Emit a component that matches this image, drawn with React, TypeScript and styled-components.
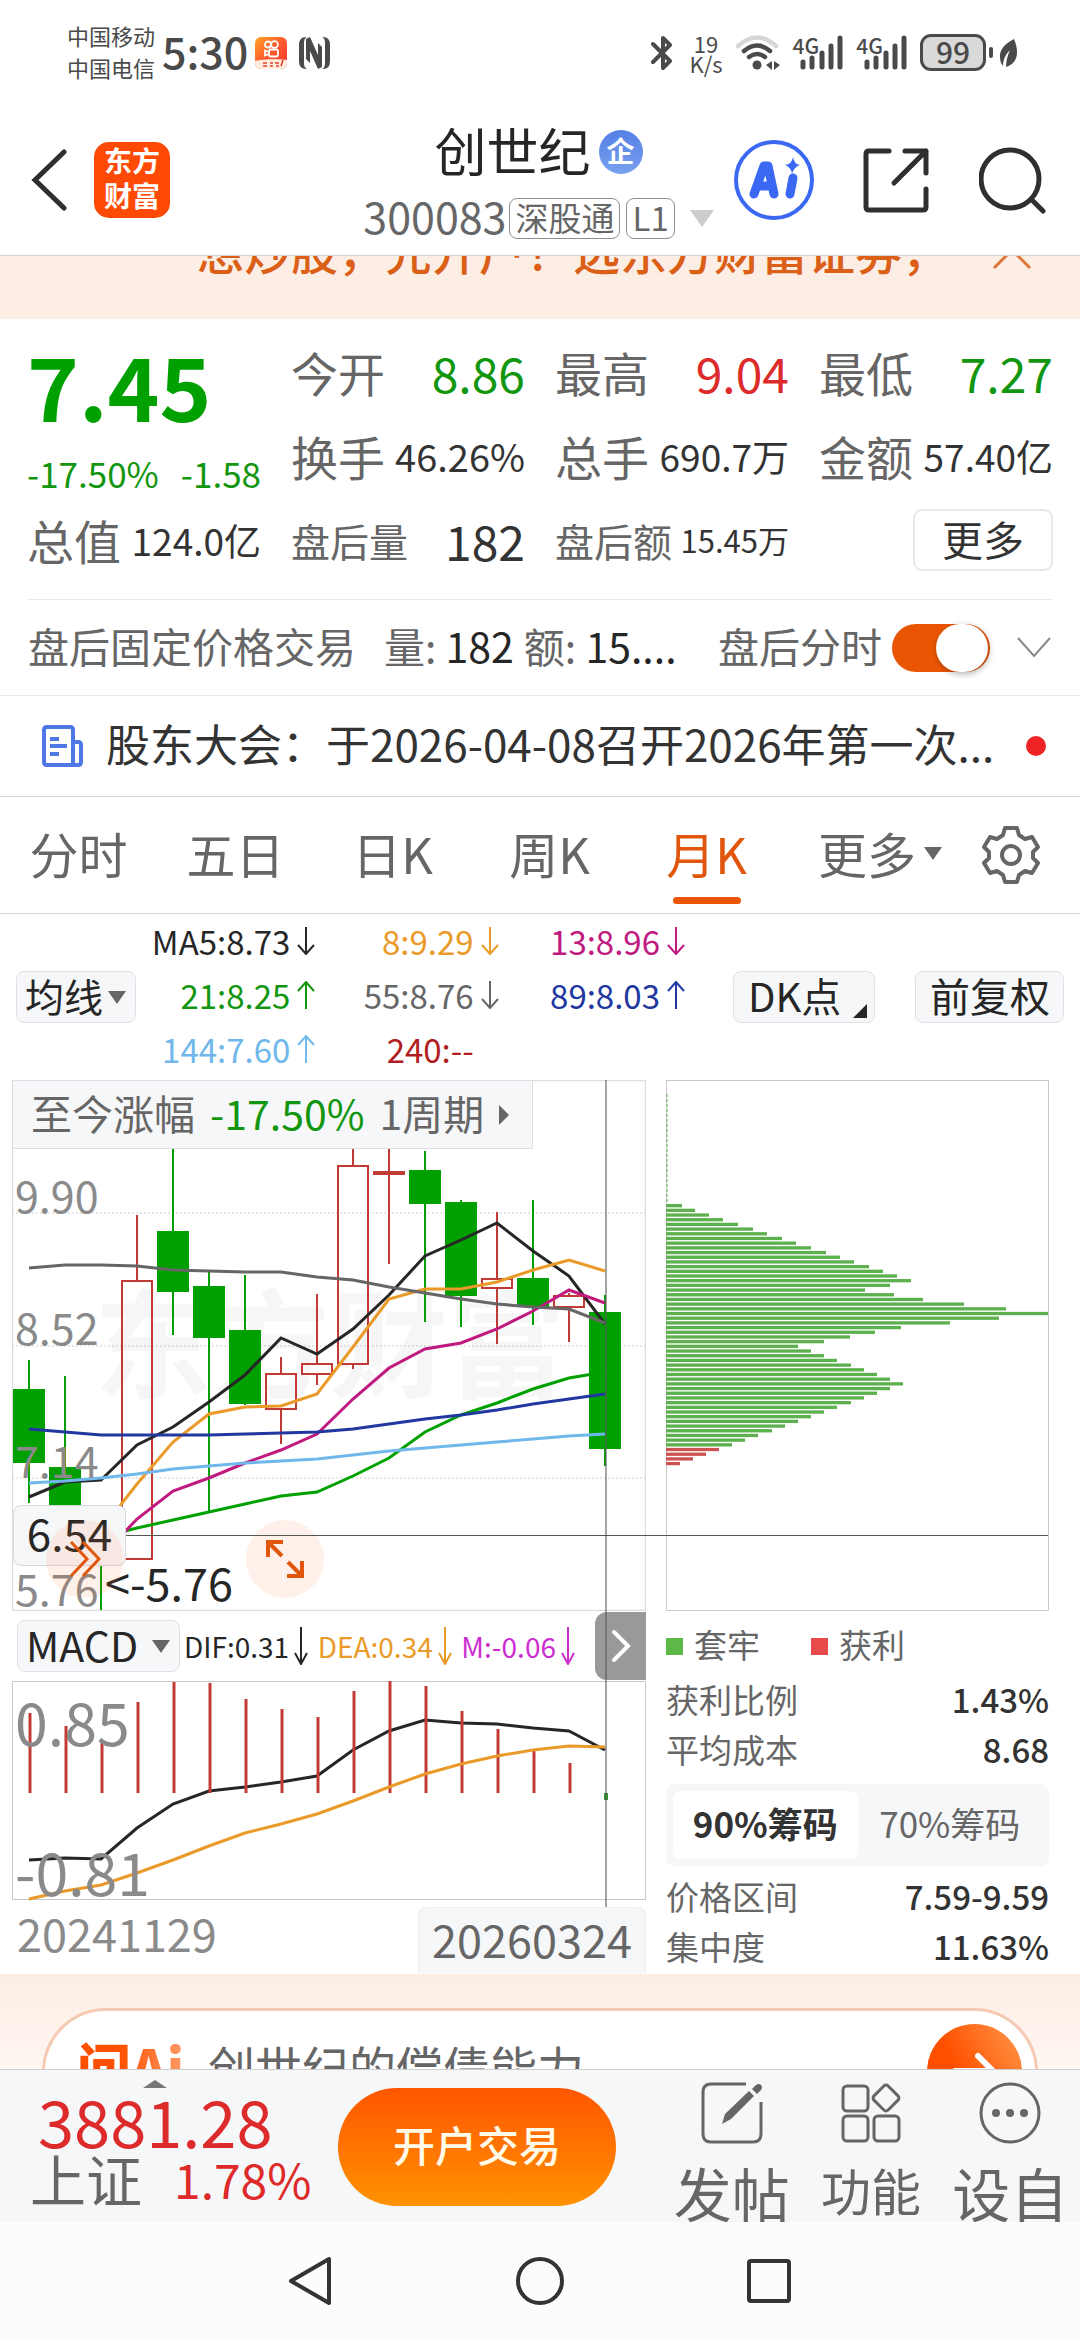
import React from "react";
import styled, { createGlobalStyle } from "styled-components";

const FONT = '"Noto Sans CJK SC", "Noto Sans", sans-serif';
const C = {
  ink: "#262626",
  text: "#333333",
  sub: "#666666",
  mute: "#8a8a8a",
  green: "#12960f",
  candle: "#00a000",
  red: "#dd2a2a",
  candleRed: "#c23a36",
  orange: "#ea5504",
  amber: "#ea9a28",
  pink: "#c01a80",
  navy: "#2138a0",
  sky: "#70b8ec",
  line: "#e9e9e9",
  soft: "#f6f7f9",
  peach: "#fceee5",
};

const Global = createGlobalStyle`
  * { box-sizing: border-box; }
  html, body { margin: 0; background: #fff; }
  body { font-family: ${FONT}; color: ${C.text}; }
  button, select, input { font: inherit; color: inherit; margin: 0; }
  button { background: none; border: 0; padding: 0; cursor: pointer; }
  dl, dd, dt, p, h1 { margin: 0; font-weight: 400; }
  svg { display: block; flex: none; }
`;

const Shell = styled.div`
  display: flex;
  flex-direction: column;
  height: 100vh;
  overflow: hidden;
`;

/* ---------- system status bar ---------- */
const StatusBar = styled.div`
  display: flex;
  align-items: center;
  justify-content: space-between;
  height: 105px;
  padding: 0 61px 0 67px;
  color: #4a4a4a;
  flex: none;
`;
const StatusGroup = styled.div<{ $gap: number }>`
  display: flex;
  align-items: center;
  gap: ${(p) => p.$gap}px;
`;
const Carriers = styled.div`
  font-size: 22px;
  line-height: 32px;
  padding-bottom: 4px;
`;
const Clock = styled.div`
  font-size: 43px;
  line-height: 48px;
  font-weight: 500;
  padding-bottom: 6px;
`;
const Rate = styled.div`
  font-size: 22px;
  line-height: 20px;
  text-align: center;
`;
const Signal = styled.div`
  display: flex;
  align-items: flex-start;
  height: 36px;
  font-size: 21px;
  line-height: 20px;
  font-weight: 500;
  svg { margin-left: -19px; }
`;
const Battery = styled.div`
  width: 66px;
  height: 37px;
  border: 3px solid #4a4a4a;
  border-radius: 11px;
  background: #d9d9d9;
  font-size: 30px;
  line-height: 28px;
  font-weight: 500;
  text-align: center;
`;

/* ---------- page header ---------- */
const Header = styled.header`
  display: grid;
  grid-template-columns: 1fr auto 1fr;
  align-items: center;
  height: 151px;
  padding: 0 34px 0 31px;
  border-bottom: 1px solid #d4d4d4;
  flex: none;
`;
const HeaderLeft = styled.div`
  display: flex;
  align-items: center;
  gap: 27px;
`;
const HeaderRight = styled.div`
  display: flex;
  align-items: center;
  justify-content: flex-end;
  gap: 49px;
`;
const Brand = styled.a`
  display: grid;
  place-content: center;
  width: 76px;
  height: 76px;
  border-radius: 15px;
  background: #ff4a05;
  color: #fff;
  font-size: 28px;
  line-height: 35px;
  font-weight: 700;
  text-decoration: none;
  padding-bottom: 4px;
`;
const TitleBlock = styled.div`
  display: flex;
  flex-direction: column;
  align-items: center;
`;
const TitleRow = styled.div`
  display: flex;
  align-items: center;
  gap: 8px;
  padding-top: 6px;
`;
const Title = styled.h1`
  font-size: 52px;
  line-height: 66px;
  color: ${C.ink};
  padding-bottom: 4px;
`;
const Verified = styled.span`
  width: 44px;
  height: 44px;
  border-radius: 50%;
  background: linear-gradient(#5480e6, #79a1ee);
  color: #fff;
  font-size: 28px;
  line-height: 40px;
  font-weight: 700;
  text-align: center;
`;
const CodeRow = styled.div`
  display: flex;
  align-items: center;
  height: 62px;
  color: ${C.sub};
`;
const Code = styled.span`
  font-size: 43px;
  line-height: 44px;
  padding-bottom: 6px;
`;
const Tag = styled.span<{ $left: number }>`
  height: 41px;
  margin-left: ${(p) => p.$left}px;
  padding: 0 5px;
  border: 1px solid #8f8f8f;
  border-radius: 8px;
  font-size: 33px;
  line-height: 36px;
`;
const Caret = styled.i<{ $size: number; $color: string; $left?: number; $up?: boolean }>`
  width: 0;
  height: 0;
  flex: none;
  margin-left: ${(p) => p.$left ?? 0}px;
  border: ${(p) => p.$size}px solid transparent;
  border-top: ${(p) => (p.$up ? "0 solid transparent" : `${Math.round(p.$size * 1.4)}px solid ${p.$color}`)};
  border-bottom: ${(p) => (p.$up ? `${p.$size - 4}px solid ${p.$color}` : "0 solid transparent")};
`;

/* ---------- scrolling content ---------- */
const Main = styled.main`
  flex: 1;
  min-height: 0;
  overflow: hidden;
`;
const Promo = styled.div`
  height: 63px;
  overflow: hidden;
  background: ${C.peach};
`;
const PromoRow = styled.div`
  display: flex;
  justify-content: space-between;
  align-items: center;
  height: 64px;
  margin-top: -38px;
  padding: 0 48px 0 197px;
  color: #db5f16;
  font-size: 47px;
  font-weight: 500;
  line-height: 60px;
  white-space: nowrap;
`;

const Quote = styled.section`
  display: grid;
  grid-template-columns: repeat(4, 1fr);
  grid-template-rows: repeat(3, 84px);
  column-gap: 30px;
  margin: 0 27px;
  padding: 11px 0 17px;
  border-bottom: 1px solid ${C.line};
`;
const PriceCell = styled.div`
  grid-row: span 2;
  color: ${C.green};
`;
const Price = styled.div`
  font-size: 88px;
  line-height: 108px;
  font-weight: 700;
  color: ${C.candle};
`;
const Change = styled.div`
  display: flex;
  justify-content: space-between;
  font-size: 35px;
  line-height: 70px;
`;
const Stat = styled.dl`
  display: flex;
  align-items: center;
  justify-content: space-between;
  white-space: nowrap;
`;
const StatLabel = styled.dt<{ $small?: boolean }>`
  font-size: ${(p) => (p.$small ? 39 : 47)}px;
  line-height: 60px;
  color: ${C.sub};
`;
const StatValue = styled.dd<{ $size: number; $color?: string }>`
  font-size: ${(p) => p.$size}px;
  line-height: 60px;
  color: ${(p) => p.$color ?? C.text};
`;
const MoreButton = styled.button`
  justify-self: end;
  align-self: center;
  width: 140px;
  height: 62px;
  border: 2px solid ${C.line};
  border-radius: 9px;
  font-size: 41px;
  line-height: 52px;
  padding-bottom: 4px;
`;

const AfterHours = styled.section`
  display: flex;
  align-items: center;
  height: 96px;
  padding: 0 28px;
  border-bottom: 1px solid ${C.line};
  font-size: 41px;
  line-height: 56px;
  color: ${C.sub};
  white-space: nowrap;
`;
const Fixed = styled.span`
  padding-bottom: 5px;
`;
const Figures = styled.div`
  display: flex;
  gap: 10px;
  flex: 1;
  margin-left: 28px;
  padding-bottom: 5px;
  b { font-weight: 400; color: ${C.ink}; }
`;
const SwitchLabel = styled.label`
  display: flex;
  align-items: center;
  gap: 10px;
`;
const Switch = styled.input`
  appearance: none;
  width: 98px;
  height: 48px;
  border-radius: 24px;
  background: ${C.orange};
  &::before {
    content: "";
    display: block;
    width: 52px;
    height: 48px;
    margin-left: 44px;
    border-radius: 24px;
    background: #fff;
    box-shadow: 1px 2px 6px rgba(0, 0, 0, 0.3);
  }
`;
const IconButton = styled.button`
  display: grid;
  place-items: center;
`;

const Notice = styled.section`
  display: flex;
  align-items: center;
  height: 101px;
  padding: 0 34px 0 41px;
  border-bottom: 1px solid #d6d6d6;
`;
const NoticeText = styled.a`
  flex: 1;
  margin-left: 22px;
  font-size: 44px;
  line-height: 60px;
  padding-bottom: 7px;
  color: ${C.text};
  text-decoration: none;
  white-space: nowrap;
`;
const Dot = styled.span`
  width: 20px;
  height: 20px;
  border-radius: 50%;
  background: #ee2326;
`;

const Tabs = styled.nav`
  display: flex;
  height: 117px;
  border-bottom: 1px solid #d6d6d6;
`;
const Tab = styled.button<{ $on?: boolean; $menu?: boolean }>`
  position: relative;
  flex: 1 1 157px;
  display: flex;
  align-items: center;
  justify-content: ${(p) => (p.$menu ? "flex-end" : "center")};
  padding-bottom: 4px;
  font-size: 49px;
  line-height: 60px;
  white-space: nowrap;
  color: ${(p) => (p.$on ? "#e0560c" : C.sub)};
  &::after {
    content: "";
    display: ${(p) => (p.$on ? "block" : "none")};
    position: absolute;
    left: calc(50% - 34px);
    bottom: 9px;
    width: 68px;
    height: 7px;
    border-radius: 4px;
    background: ${C.orange};
  }
`;
const GearButton = styled(IconButton)`
  flex: 1 1 138px;
`;

const Indicators = styled.section`
  display: flex;
  align-items: center;
  height: 166px;
  padding: 0 16px;
`;
const chip = `
  flex: none;
  height: 52px;
  border: 1px solid #dfe1e6;
  border-radius: 8px;
  background: ${C.soft};
  color: ${C.ink};
  white-space: nowrap;
`;
const Picker = styled.label<{ $width: number; $size: number }>`
  ${chip}
  display: flex;
  align-items: center;
  justify-content: space-between;
  width: ${(p) => p.$width}px;
  padding: 0 9px 0 8px;
  font-size: ${(p) => p.$size}px;
  select {
    appearance: none;
    border: 0;
    background: none;
    padding: 0 0 4px;
    line-height: 46px;
    outline: 0;
  }
`;
const Chip = styled.button<{ $width: number; $left: number }>`
  ${chip}
  display: flex;
  align-items: flex-end;
  justify-content: space-between;
  width: ${(p) => p.$width}px;
  margin-left: ${(p) => p.$left}px;
  padding: 0 7px 4px 14px;
  font-size: 40px;
  line-height: 46px;
`;
const Readings = styled.div`
  flex: 1;
  display: grid;
  grid-template-columns: 179fr 183fr 186fr;
  grid-auto-rows: 54px;
  padding-bottom: 4px;
`;
const Reading = styled.span<{ $color: string; $compact?: boolean }>`
  display: flex;
  align-items: center;
  justify-content: flex-end;
  gap: ${(p) => (p.$compact ? 5 : 7)}px;
  color: ${(p) => p.$color};
  font-size: ${(p) => (p.$compact ? 28 : 33)}px;
  line-height: 46px;
  white-space: nowrap;
`;

/* ---------- charts ---------- */
const Charts = styled.section`
  position: relative;
  display: grid;
  grid-template-columns: 634fr 383fr;
  column-gap: 20px;
  padding: 0 31px 0 12px;
`;
const Panel = styled.div`
  position: relative;
  min-width: 0;
`;
const Plot = styled.svg`
  width: 100%;
  height: auto;
  text { font-family: ${FONT}; }
`;
const VLine = styled.i`
  position: absolute;
  left: 93.5%;
  top: 0;
  width: 2px;
  height: 827px;
  background: rgba(90, 90, 90, 0.55);
`;
const HLine = styled.i`
  position: absolute;
  left: 126px;
  right: 32px;
  top: 455px;
  height: 1px;
  background: #555;
`;
const Since = styled.button`
  position: absolute;
  left: 0;
  top: 0;
  display: flex;
  align-items: center;
  gap: 15px;
  width: 521px;
  height: 69px;
  padding: 0 18px 6px;
  border: 1px solid #dcdee2;
  background: ${C.soft};
  color: ${C.sub};
  font-size: 41px;
  line-height: 60px;
  white-space: nowrap;
  b { font-weight: 400; color: ${C.green}; }
  svg { margin-top: 6px; }
`;
const CursorPrice = styled.output`
  position: absolute;
  left: 1px;
  top: 425px;
  width: 113px;
  height: 61px;
  border: 1px solid #d6d8dc;
  border-radius: 8px;
  background: ${C.soft};
  color: ${C.ink};
  font-size: 44px;
  line-height: 52px;
  text-align: center;
`;
const RoundButton = styled(IconButton)<{ $left: number }>`
  position: absolute;
  left: ${(p) => p.$left}px;
  top: 440px;
  width: 78px;
  height: 78px;
  border-radius: 50%;
  background: rgba(255, 110, 40, 0.1);
`;

const MacdHead = styled.div`
  display: flex;
  align-items: center;
  height: 70px;
  padding-left: 5px;
`;
const MacdValues = styled.div`
  display: flex;
  flex: 1;
  justify-content: space-between;
  padding: 0 20px 0 4px;
`;
const NextButton = styled(IconButton)`
  align-self: flex-start;
  width: 51px;
  height: 68px;
  margin-top: 1px;
  border-radius: 12px 0 0 12px;
  background: #999;
`;
const Dates = styled.div`
  display: flex;
  justify-content: space-between;
  height: 72px;
  padding-left: 5px;
  font-size: 45px;
  line-height: 64px;
  color: ${C.mute};
`;
const CursorDate = styled.time`
  align-self: flex-end;
  width: 228px;
  height: 66px;
  border: 1px solid #eceef1;
  border-bottom: 0;
  border-radius: 8px 8px 0 0;
  background: ${C.soft};
  color: ${C.sub};
  line-height: 62px;
  text-align: center;
`;

const Legend = styled.div`
  display: flex;
  height: 66px;
  align-items: center;
  gap: 51px;
`;
const LegendItem = styled.span<{ $color: string }>`
  display: flex;
  align-items: center;
  gap: 11px;
  font-size: 33px;
  line-height: 46px;
  color: ${C.sub};
  &::before {
    content: "";
    width: 17px;
    height: 17px;
    margin-top: 4px;
    background: ${(p) => p.$color};
  }
`;
const ChipStats = styled.dl`
  display: grid;
  grid-template-columns: auto auto;
  grid-auto-rows: 50px;
  justify-content: space-between;
  font-size: 33px;
  line-height: 44px;
  dt { color: ${C.sub}; }
  dd { font-weight: 500; text-align: right; }
`;
const Segments = styled.div`
  display: grid;
  grid-template-columns: 184fr 184fr;
  height: 82px;
  margin: 7px 0 8px;
  padding: 7px;
  border-radius: 8px;
  background: ${C.soft};
`;
const Segment = styled.button<{ $on?: boolean }>`
  border-radius: 8px;
  background: ${(p) => (p.$on ? "#fff" : "transparent")};
  color: ${(p) => (p.$on ? C.text : C.sub)};
  font-weight: ${(p) => (p.$on ? 700 : 400)};
  font-size: 35px;
  line-height: 60px;
  padding-bottom: 4px;
`;

const Ask = styled.section`
  padding: 34px 42px;
  background: linear-gradient(${C.peach}, #fff6f0 96px);
`;
const AskCard = styled.a`
  display: flex;
  align-items: center;
  height: 132px;
  padding: 0 13px 6px 32px;
  border: 3px solid #f5c9b2;
  border-radius: 64px;
  background: #fff;
  color: ${C.sub};
  font-size: 47px;
  line-height: 60px;
  text-decoration: none;
`;
const AskLogo = styled.span`
  padding-bottom: 10px;
  font-size: 54px;
  line-height: 60px;
  font-weight: 900;
  color: transparent;
  background: linear-gradient(90deg, #ff5000 40%, #ff9a66);
  background-clip: text;
  -webkit-background-clip: text;
`;
const AskText = styled.span`
  flex: 1;
  margin-left: 24px;
  padding-bottom: 10px;
`;
const Go = styled.span`
  display: grid;
  place-items: center;
  width: 95px;
  height: 95px;
  border-radius: 50%;
  background: linear-gradient(60deg, #ff5000 40%, #ff9a4c);
`;

/* ---------- footer ---------- */
const ActionBar = styled.footer`
  display: flex;
  height: 153px;
  padding-left: 30px;
  border-top: 1px solid #cfcfcf;
  background: ${C.soft};
  flex: none;
`;
const IndexBox = styled.button`
  display: flex;
  flex-direction: column;
  justify-content: flex-start;
  width: 308px;
  padding-top: 10px;
  text-align: left;
  color: ${C.red};
  white-space: nowrap;
`;
const IndexValue = styled.span`
  padding-left: 8px;
  font-size: 65px;
  line-height: 64px;
`;
const IndexRow = styled.span`
  display: flex;
  align-items: center;
  gap: 32px;
  font-size: 48px;
  line-height: 52px;
`;
const IndexName = styled.span`
  font-size: 56px;
  color: ${C.sub};
`;
const TradeButton = styled.button`
  width: 278px;
  height: 118px;
  margin: 18px 46px 0 0;
  border-radius: 59px;
  background: linear-gradient(#ff5600, #ff9200);
  color: #fffbe8;
  font-size: 42px;
  line-height: 60px;
  font-weight: 500;
  padding-bottom: 6px;
`;
const Actions = styled.div`
  display: grid;
  grid-template-columns: repeat(3, 1fr);
  flex: 1;
`;
const Action = styled.button<{ $size: number }>`
  display: flex;
  flex-direction: column;
  align-items: center;
  gap: 12px;
  padding-top: 12px;
  font-size: ${(p) => p.$size}px;
  line-height: ${(p) => (p.$size > 50 ? 72 : 66)}px;
  white-space: nowrap;
  color: ${C.sub};
`;
const SystemNav = styled.nav`
  display: flex;
  align-items: center;
  justify-content: center;
  gap: 181px;
  height: 118px;
  background: #fcfcfc;
  flex: none;
`;

/* ---------- data ---------- */
const STEP = 36;
const X0 = 17;
const xAt = (i: number) => X0 + STEP * i;

type Candle = [up: 0 | 1, high: number, top: number, bottom: number, low: number];
const CANDLES: Candle[] = [
  [0, 280, 310, 382, 423], [0, 296, 388, 440, 450], [0, 440, 446, 470, 530],
  [1, 135, 201, 479, 479], [0, 40, 152, 211, 255], [0, 192, 207, 257, 432],
  [0, 195, 251, 323, 325], [1, 277, 294, 329, 364], [1, 214, 284, 294, 305],
  [1, 40, 86, 284, 289], [1, 40, 92, 94, 184], [0, 71, 91, 123, 242],
  [0, 120, 123, 215, 247], [1, 132, 199, 208, 264], [0, 120, 199, 226, 245],
  [1, 213, 216, 227, 262], [0, 215, 233, 368, 386],
];
const LINES: { color: string; from: number; ys: number[] }[] = [
  { color: C.candle, from: 2, ys: [457, 448, 440, 432, 424, 416, 412, 396, 378, 352, 335, 323, 309, 298, 292] },
  { color: C.ink, from: 0, ys: [417, 402, 400, 365, 347, 322, 295, 258, 274, 249, 215, 176, 160, 143, 171, 196, 244] },
  { color: C.amber, from: 2, ys: [450, 404, 362, 334, 327, 326, 314, 267, 219, 209, 209, 202, 190, 180, 191] },
  { color: C.pink, from: 2, ys: [477, 439, 411, 398, 383, 370, 354, 319, 288, 269, 263, 249, 231, 210, 223] },
  { color: C.sub, from: 0, ys: [188, 185, 185, 186, 190, 191, 192, 192, 197, 200, 207, 213, 219, 224, 227, 229, 243] },
  { color: C.navy, from: 0, ys: [349, 352, 355, 355, 355, 355, 354, 353, 352, 349, 344, 339, 335, 330, 324, 319, 314] },
  { color: C.sky, from: 0, ys: [403, 401, 398, 394, 389, 386, 383, 381, 379, 375, 371, 368, 365, 362, 359, 356, 354] },
];
const MACD_TOPS = [32, 45, 62, 21, 1, 2, 18, 28, 36, 10, 0, 5, 30, 48, 68, 82];
const DIF = [179, 177, 178, 147, 123, 110, 106, 101, 95, 69, 50, 39, 42, 43, 47, 50, 69];
const DEA = [218, 210, 204, 192, 179, 165, 152, 143, 133, 120, 106, 93, 83, 75, 69, 65, 66];
const HOLDINGS = [
  16, 29, 43, 57, 72, 87, 101, 116, 130, 145, 160, 174, 188, 203, 217, 231, 245, 224, 199, 228, 257, 298, 340,
  382, 333, 284, 235, 209, 184, 158, 132, 145, 158, 171, 185, 198, 211, 224, 237, 224, 211, 198, 185, 171, 158,
  145, 132, 119, 106, 92, 79, 66, 53, 40, 27, 14,
];
const pts = (ys: number[], from = 0) => ys.map((y, i) => `${xAt(i + from)},${y}`).join(" ");

const READINGS = [
  { t: "MA5:8.73", c: C.ink, d: -1 }, { t: "8:9.29", c: C.amber, d: -1 }, { t: "13:8.96", c: C.pink, d: -1 },
  { t: "21:8.25", c: C.green, d: 1 }, { t: "55:8.76", c: C.sub, d: -1 }, { t: "89:8.03", c: C.navy, d: 1 },
  { t: "144:7.60", c: C.sky, d: 1 }, { t: "240:--", c: "#b01e22", d: 0 },
];

const Arrow = ({ dir }: { dir: number }) => (
  <svg width="18" height="28" viewBox="0 0 18 28" fill="none" stroke="currentColor" strokeWidth="2">
    {dir < 0 && <path d="M9 0V27M1 18L9 27L17 18" />}
    {dir > 0 && <path d="M9 28V1M1 10L9 1L17 10" />}
  </svg>
);
const SlimArrow = () => (
  <svg width="14" height="38" viewBox="0 0 14 38" fill="none" stroke="currentColor" strokeWidth="2">
    <path d="M7 0V37M1 26L7 37L13 26" />
  </svg>
);

const SignalIcon = () => (
  <Signal>
    4G
    <svg width="44" height="36" viewBox="0 0 44 36" stroke="#4a4a4a" strokeWidth="5" strokeLinecap="round">
      <path d="M3 27V32M12 23V32M22 18V32M31 11V32M40 3V32" />
    </svg>
  </Signal>
);

function Status() {
  return (
    <StatusBar>
      <StatusGroup $gap={7}>
        <Carriers>中国移动<br />中国电信</Carriers>
        <Clock>5:30</Clock>
        <StatusGroup $gap={12}>
          <svg width="32" height="32" viewBox="0 0 32 32">
            <defs>
              <linearGradient id="kwai" x1="0" y1="0" x2="1" y2="1">
                <stop offset="0" stopColor="#ffa424" /><stop offset="0.5" stopColor="#ff5a2e" /><stop offset="1" stopColor="#f5332e" />
              </linearGradient>
            </defs>
            <rect width="32" height="32" rx="6" fill="url(#kwai)" />
            <g fill="none" stroke="#fff" strokeWidth="1.800">
              <circle cx="13" cy="7.500" r="3" /><circle cx="19.500" cy="7.500" r="3.400" />
              <rect x="14" y="12.500" width="9" height="7" rx="2" /><path d="M14 15l-4-1.500v5l4-1.500" />
            </g>
            <path d="M0 24c8-2 24-2 32-1v3a6 6 0 0 1-6 6H6a6 6 0 0 1-6-6z" fill="#ffeede" />
            <path d="M8 26h4M8 29h4M15 26h3M15 29h3M20 26h4M21 29h3M28 23l-2 6" stroke="#e2402e" strokeWidth="1.600" />
          </svg>
          <svg width="31" height="32" viewBox="0 0 31 32" fill="#4a4a4a">
            <path d="M8 0H7Q0 0 0 8V24Q0 32 7 32H8Q5 31 5 26V6Q5 1 8 0z" />
            <path d="M23 0h1q7 0 7 8v16q0 8-7 8h-1q3-1 3-6V6q0-5-3-6z" />
            <path d="M7 2l4-2 8 18V6l4 4v20l-4 2-8-18v12l-4-4z" />
          </svg>
        </StatusGroup>
      </StatusGroup>
      <StatusGroup $gap={12}>
        <svg width="26" height="36" viewBox="0 0 26 36" fill="none" stroke="#4a4a4a" strokeWidth="4" strokeLinejoin="round" strokeLinecap="round">
          <path d="M2 9L19 26L12 33V3L19 10L2 27" />
        </svg>
        <Rate>19<br />K/s</Rate>
        <svg width="46" height="36" viewBox="0 0 46 36" fill="none" strokeWidth="4.500" strokeLinecap="round">
          <path d="M3 11Q22-6 41 11" stroke="#d6d6d6" />
          <path d="M9 16Q22 5 35 16" stroke="#4a4a4a" />
          <path d="M14 22Q22 16 30 22" stroke="#4a4a4a" />
          <circle cx="22" cy="30" r="4.500" fill="#4a4a4a" />
          <path d="M37 26v9l-6-5zM39 26v9l6-5z" fill="#4a4a4a" />
        </svg>
        <SignalIcon />
        <SignalIcon />
        <StatusGroup $gap={3}>
          <Battery>99</Battery>
          <svg width="30" height="36" viewBox="0 0 30 36">
            <rect x="0" y="12" width="4" height="11" rx="2" fill="#4a4a4a" />
            <path d="M25 4C12 11 9 18 12 28L14 31Q14 22 21 15Q17 24 17 32C28 29 31 18 25 4z" fill="#4a4a4a" />
          </svg>
        </StatusGroup>
      </StatusGroup>
    </StatusBar>
  );
}

function PageHeader() {
  return (
    <Header>
      <HeaderLeft>
        <IconButton aria-label="返回">
          <svg width="36" height="62" viewBox="0 0 36 62" fill="none" stroke="#2f2f2f" strokeWidth="5" strokeLinecap="round">
            <path d="M33 3L4 31L33 59" />
          </svg>
        </IconButton>
        <Brand href="#home"><span>东方</span><span>财富</span></Brand>
      </HeaderLeft>
      <TitleBlock>
        <TitleRow>
          <Title>创世纪</Title>
          <Verified>企</Verified>
        </TitleRow>
        <CodeRow>
          <Code>300083</Code>
          <Tag $left={3}>深股通</Tag>
          <Tag $left={6}>L1</Tag>
          <Caret $size={12} $color="#cccccc" $left={15} />
        </CodeRow>
      </TitleBlock>
      <HeaderRight>
        <IconButton aria-label="Ai">
          <svg width="80" height="80" viewBox="0 0 80 80" fill="none" stroke="#3a68f2" strokeLinecap="round" strokeLinejoin="round">
            <circle cx="40" cy="40" r="38" strokeWidth="4" />
            <path d="M20 54L30 26H34L40 54M25 46H38" strokeWidth="9" />
            <path d="M59 38L56 54" strokeWidth="9" />
            <path d="M59 17Q60 24 66 25Q60 27 58 34Q57 27 51 25Q58 24 59 17z" fill="#3a68f2" stroke="none" />
          </svg>
        </IconButton>
        <IconButton aria-label="分享">
          <svg width="67" height="67" viewBox="0 0 67 67" fill="none" stroke="#2f2f2f" strokeWidth="5" strokeLinecap="round" strokeLinejoin="round">
            <path d="M26 4H6Q3 4 3 7V60Q3 63 6 63H60Q63 63 63 60V42M42 4H63V26M63 4L31 36" />
          </svg>
        </IconButton>
        <IconButton aria-label="搜索">
          <svg width="67" height="67" viewBox="0 0 67 67" fill="none" stroke="#2f2f2f" strokeWidth="5" strokeLinecap="round">
            <circle cx="31" cy="32" r="29" /><path d="M53 53L64 64" />
          </svg>
        </IconButton>
      </HeaderRight>
    </Header>
  );
}

const Item = ({ label, value, size, color, small }: { label: string; value: string; size: number; color?: string; small?: boolean }) => (
  <Stat>
    <StatLabel $small={small}>{label}</StatLabel>
    <StatValue $size={size} $color={color}>{value}</StatValue>
  </Stat>
);

function PricePlot() {
  return (
    <Plot viewBox="0 0 634 531" role="img" aria-label="月K线">
      <rect x="0.500" y="0.500" width="633" height="530" fill="#fff" stroke="#dedede" strokeWidth="1.500" />
      {[133, 266, 398].map((y) => <path key={y} d={`M0 ${y}H634`} stroke="#d0d0d0" strokeDasharray="2 2" />)}
      <text x="318" y="309" fontSize="118" fontWeight="700" textAnchor="middle" fill="#000" fillOpacity="0.035">东方财富</text>
      {CANDLES.map(([up, high, top, bottom, low], i) => {
        const x = xAt(i);
        const color = up ? C.candleRed : C.candle;
        return (
          <g key={i} stroke={color} strokeWidth="2">
            <path d={`M${x} ${high}V${top}M${x} ${bottom}V${low}`} />
            <rect x={x - 15} y={top} width="30" height={bottom - top} fill={up ? "#fff" : color} fillOpacity={up ? 0 : 1} />
          </g>
        );
      })}
      {LINES.map((l) => <polyline key={l.color} points={pts(l.ys, l.from)} fill="none" stroke={l.color} strokeWidth="3" />)}
      <g fontSize="43" fill={C.mute}>
        <text x="3" y="133">9.90</text>
        <text x="3" y="265">8.52</text>
        <text x="3" y="398">7.14</text>
        <text x="3" y="526">5.76</text>
      </g>
      <text x="93" y="521" fontSize="45" fill={C.ink}>&lt;-5.76</text>
    </Plot>
  );
}

function MacdPlot() {
  return (
    <Plot viewBox="0 0 634 220" role="img" aria-label="MACD">
      <rect x="0.500" y="0.500" width="633" height="218" fill="#fff" stroke="#c8c8c8" />
      <polyline points={pts(DIF)} fill="none" stroke={C.ink} strokeWidth="3" />
      {MACD_TOPS.map((t, i) => <path key={i} d={`M${xAt(i) + 1} ${t}V112`} stroke={C.candleRed} strokeWidth="3" />)}
      <path d="M594 112V119" stroke="#2f9a2f" strokeWidth="4" />
      <polyline points={pts(DEA)} fill="none" stroke={C.amber} strokeWidth="3" />
      <g fontSize="59" fill={C.mute}>
        <text x="3" y="65">0.85</text>
        <text x="3" y="215">-0.81</text>
      </g>
    </Plot>
  );
}

function HoldingsPlot() {
  return (
    <Plot viewBox="0 0 383 531" role="img" aria-label="筹码分布">
      <rect x="0.500" y="0.500" width="382" height="530" fill="#fff" stroke="#c8c8c8" />
      <path d="M1 14V124" stroke="#5faf50" strokeWidth="1" strokeDasharray="3 2" />
      {HOLDINGS.map((w, i) => (
        <rect key={i} x="0" y={124 + i * 4.69} width={w} height="3.300" fill={i < 52 ? "#5db04e" : "#cc5252"} />
      ))}
    </Plot>
  );
}

export default function App() {
  return (
    <Shell>
      <Global />
      <Status />
      <PageHeader />
      <Main>
        <Promo>
          <PromoRow>
            <span>想炒股，先开户！选东方财富证券，</span>
            <IconButton aria-label="关闭">
              <svg width="40" height="40" viewBox="0 0 40 40" fill="none" stroke="#e0783c" strokeWidth="3">
                <path d="M2 2L38 38M38 2L2 38" />
              </svg>
            </IconButton>
          </PromoRow>
        </Promo>

        <Quote>
          <PriceCell>
            <Price>7.45</Price>
            <Change><span>-17.50%</span><span>-1.58</span></Change>
          </PriceCell>
          <Item label="今开" value="8.86" size={48} color={C.green} />
          <Item label="最高" value="9.04" size={48} color={C.red} />
          <Item label="最低" value="7.27" size={48} color={C.green} />
          <Item label="换手" value="46.26%" size={38} />
          <Item label="总手" value="690.7万" size={37} />
          <Item label="金额" value="57.40亿" size={37} />
          <Item label="总值" value="124.0亿" size={37} />
          <Item label="盘后量" value="182" size={48} small />
          <Item label="盘后额" value="15.45万" size={31} small />
          <MoreButton>更多</MoreButton>
        </Quote>

        <AfterHours>
          <Fixed>盘后固定价格交易</Fixed>
          <Figures><span>量: <b>182</b></span><span>额: <b>15....</b></span></Figures>
          <SwitchLabel><Fixed>盘后分时</Fixed><Switch type="checkbox" defaultChecked /></SwitchLabel>
          <IconButton aria-label="展开">
            <svg width="62" height="24" viewBox="0 0 62 24" fill="none" stroke="#888" strokeWidth="2">
              <path d="M28 2L44 20L60 2" />
            </svg>
          </IconButton>
        </AfterHours>

        <Notice>
          <svg width="43" height="44" viewBox="0 0 43 44" fill="none" stroke="#4f78e6" strokeWidth="4" strokeLinejoin="round">
            <path d="M32 41H6Q3 41 3 38V6Q3 3 6 3H29Q32 3 32 6zM32 18H37Q40 18 40 21V38Q40 41 37 41H32" />
            <path d="M9 15H18M9 22H26M9 30H18" />
          </svg>
          <NoticeText href="#notice">股东大会：于2026-04-08召开2026年第一次...</NoticeText>
          <Dot />
        </Notice>

        <Tabs>
          <Tab>分时</Tab>
          <Tab>五日</Tab>
          <Tab>日K</Tab>
          <Tab>周K</Tab>
          <Tab $on>月K</Tab>
          <Tab $menu>更多<Caret $size={9} $color={C.sub} $left={8} /></Tab>
          <GearButton aria-label="设置">
            <svg width="60" height="60" viewBox="0 0 60 60" fill="none" stroke={C.sub} strokeWidth="4" strokeLinejoin="round">
              <path d="M24 3H36L38 10L44 14L51 12L57 22L52 27V33L57 38L51 48L44 46L38 50L36 57H24L22 50L16 46L9 48L3 38L8 33V27L3 22L9 12L16 14L22 10z" />
              <circle cx="30" cy="30" r="9" />
            </svg>
          </GearButton>
        </Tabs>

        <Indicators>
          <Picker $width={120} $size={39}>
            <select aria-label="指标"><option>均线</option></select>
            <Caret $size={9} $color={C.sub} />
          </Picker>
          <Readings>
            {READINGS.map((r) => (
              <Reading key={r.t} $color={r.c}>{r.t}<Arrow dir={r.d} /></Reading>
            ))}
          </Readings>
          <Chip $width={142} $left={48}>
            DK点
            <svg width="14" height="14" viewBox="0 0 14 14"><path d="M14 0V14H0z" fill={C.ink} /></svg>
          </Chip>
          <Chip $width={149} $left={40}>前复权</Chip>
        </Indicators>

        <Charts>
          <Panel>
            <PricePlot />
            <MacdHead>
              <Picker $width={163} $size={41}>
                <select aria-label="副图指标"><option>MACD</option></select>
                <Caret $size={9} $color={C.sub} />
              </Picker>
              <MacdValues>
                <Reading $compact $color={C.ink}>DIF:0.31<SlimArrow /></Reading>
                <Reading $compact $color={C.amber}>DEA:0.34<SlimArrow /></Reading>
                <Reading $compact $color="#cc2ed0">M:-0.06<SlimArrow /></Reading>
              </MacdValues>
              <NextButton aria-label="下一个">
                <svg width="20" height="34" viewBox="0 0 20 34" fill="none" stroke="#fff" strokeWidth="4" strokeLinecap="round">
                  <path d="M3 3L17 17L3 31" />
                </svg>
              </NextButton>
            </MacdHead>
            <MacdPlot />
            <Dates>
              <time>20241129</time>
              <CursorDate>20260324</CursorDate>
            </Dates>
            <VLine />
            <Since>
              <span>至今涨幅</span>
              <b>-17.50%</b>
              <span>1周期</span>
              <svg width="10" height="22" viewBox="0 0 10 22"><path d="M0 1L10 11L0 21z" fill={C.sub} /></svg>
            </Since>
            <CursorPrice>6.54</CursorPrice>
            <RoundButton $left={34} aria-label="展开行情">
              <svg width="32" height="36" viewBox="0 0 32 36" fill="none" stroke="#e0560c" strokeWidth="3">
                <path d="M2 1L18 18L2 35M14 1L30 18L14 35" />
              </svg>
            </RoundButton>
            <RoundButton $left={234} aria-label="全屏">
              <svg width="38" height="38" viewBox="0 0 38 38" fill="none" stroke="#e0560c" strokeWidth="4">
                <path d="M2 17V2H17M2 2L16 16M21 36H36V21M36 36L22 22" />
              </svg>
            </RoundButton>
          </Panel>
          <Panel>
            <HoldingsPlot />
            <Legend>
              <LegendItem $color="#5cb947">套牢</LegendItem>
              <LegendItem $color="#e64a4a">获利</LegendItem>
            </Legend>
            <ChipStats>
              <dt>获利比例</dt><dd>1.43%</dd>
              <dt>平均成本</dt><dd>8.68</dd>
            </ChipStats>
            <Segments>
              <Segment $on>90%筹码</Segment>
              <Segment>70%筹码</Segment>
            </Segments>
            <ChipStats>
              <dt>价格区间</dt><dd>7.59-9.59</dd>
              <dt>集中度</dt><dd>11.63%</dd>
            </ChipStats>
          </Panel>
          <HLine />
        </Charts>

        <Ask>
          <AskCard href="#ask">
            <AskLogo>问Ai</AskLogo>
            <AskText>创世纪的偿债能力</AskText>
            <Go>
              <svg width="48" height="48" viewBox="0 0 48 48" fill="none" stroke="#fff" strokeWidth="6" strokeLinecap="round">
                <path d="M4 24H42M27 9L42 24L27 39" />
              </svg>
            </Go>
          </AskCard>
        </Ask>
      </Main>

      <ActionBar>
        <IndexBox>
          <Caret $size={12} $color="#777" $left={113} $up />
          <IndexValue>3881.28</IndexValue>
          <IndexRow><IndexName>上证</IndexName>1.78%</IndexRow>
        </IndexBox>
        <TradeButton>开户交易</TradeButton>
        <Actions>
          <Action $size={58}>
            <svg width="62" height="62" viewBox="0 0 62 62" fill="none" stroke={C.sub} strokeWidth="3">
              <path d="M45 2H10Q2 2 2 10V52Q2 60 10 60H52Q60 60 60 52V20" />
              <path d="M21 42L24 32L48 9L53 14L30 37z" fill={C.sub} stroke="none" />
              <path d="M51 7L55 3Q58 1 60 3T60 8L56 12z" fill={C.sub} stroke="none" />
            </svg>
            发帖
          </Action>
          <Action $size={50}>
            <svg width="62" height="62" viewBox="0 0 62 62" fill="none" stroke={C.sub} strokeWidth="3">
              <rect x="3" y="4" width="25" height="25" rx="4" />
              <rect x="3" y="34" width="25" height="25" rx="4" />
              <rect x="34" y="34" width="25" height="25" rx="4" />
              <rect x="36" y="6" width="20" height="20" rx="3" transform="rotate(45 46 16)" />
            </svg>
            功能
          </Action>
          <Action $size={58}>
            <svg width="62" height="62" viewBox="0 0 62 62" fill="none" stroke={C.sub} strokeWidth="3">
              <circle cx="31" cy="31" r="29" />
              <g fill={C.sub} stroke="none"><circle cx="17" cy="31" r="4" /><circle cx="31" cy="31" r="4" /><circle cx="45" cy="31" r="4" /></g>
            </svg>
            设自
          </Action>
        </Actions>
      </ActionBar>

      <SystemNav>
        <IconButton aria-label="后退">
          <svg width="48" height="50" viewBox="0 0 48 50" fill="none" stroke="#333" strokeWidth="4" strokeLinejoin="round"><path d="M42 3V47L4 25z" /></svg>
        </IconButton>
        <IconButton aria-label="主屏幕">
          <svg width="48" height="50" viewBox="0 0 48 50" fill="none" stroke="#333" strokeWidth="4"><circle cx="24" cy="25" r="22" /></svg>
        </IconButton>
        <IconButton aria-label="最近任务">
          <svg width="48" height="50" viewBox="0 0 48 50" fill="none" stroke="#333" strokeWidth="4"><rect x="4" y="5" width="40" height="40" rx="2" /></svg>
        </IconButton>
      </SystemNav>
    </Shell>
  );
}
